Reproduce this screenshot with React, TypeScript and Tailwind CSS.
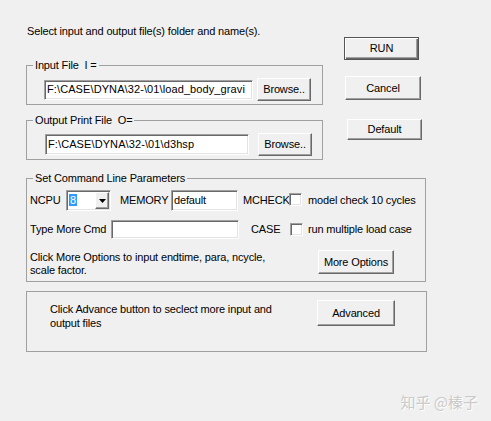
import React from "react";

const raised =
  "flex items-center justify-center bg-[#f0f0f0] border border-t-white border-l-white border-r-[#696969] border-b-[#696969] shadow-[inset_-1px_-1px_0_#a0a0a0]";
const sunken =
  "bg-white border border-t-[#a0a0a0] border-l-[#a0a0a0] border-r-white border-b-white shadow-[inset_1px_1px_0_#696969,inset_-1px_-1px_0_#e3e3e3]";

function Btn({ className, children }: { className: string; children: React.ReactNode }) {
  return <div className={`${raised} ${className}`}>{children}</div>;
}

function Check() {
  return <div className={`${sunken} w-[13px] h-[13px] shrink-0`} />;
}

export default function App() {
  return (
    <div className="relative w-[491px] h-[421px] overflow-hidden bg-[#f0f0f0] text-black text-[11px] leading-[13px] tracking-[-0.15px] font-['Liberation_Sans',Arial,sans-serif]">
      {/* upper part: file groups on the left, command buttons on the right */}
      <div className="flex">
        <div className="ml-[26px] w-[297px]">
          <p className="pt-[25px] pl-[1px] whitespace-nowrap">
            Select input and output file(s) folder and name(s).
          </p>

          <fieldset className="mt-[21px] border border-[#a0a0a0]">
            <legend className="ml-[6px] px-[2px] whitespace-pre">Input File  I =</legend>
            <div className="flex items-center pl-[17px] pt-[6px] pb-[3px]">
              <div className={`${sunken} w-[209px] h-[20px] pl-[2px] flex items-center overflow-hidden whitespace-nowrap tracking-[0.1px]`}>
                F:\CASE\DYNA\32-\01\load_body_gravi
              </div>
              <Btn className="ml-[4px] w-[54px] h-[23px]">Browse..</Btn>
            </div>
          </fieldset>

          <fieldset className="mt-[9px] border border-[#a0a0a0]">
            <legend className="ml-[6px] px-[2px] whitespace-pre">Output Print File  O=</legend>
            <div className="flex items-center pl-[18px] pt-[6px] pb-[3px]">
              <div className={`${sunken} w-[204px] h-[21px] pl-[2px] flex items-center overflow-hidden whitespace-nowrap tracking-[0.1px]`}>
                F:\CASE\DYNA\32-\01\d3hsp
              </div>
              <Btn className="ml-[9px] w-[54px] h-[23px]">Browse..</Btn>
            </div>
          </fieldset>
        </div>

        <div className="ml-[21px] flex flex-col items-start">
          <Btn className="mt-[37px] w-[75px] h-[23px] !border-[#555] shadow-[inset_1px_1px_0_#fff,inset_-1px_-1px_0_#696969,inset_-2px_-2px_0_#a0a0a0]">
            RUN
          </Btn>
          <Btn className="mt-[16px] ml-[1px] w-[76px] h-[24px]">Cancel</Btn>
          <Btn className="mt-[19px] ml-[3px] w-[75px] h-[21px]">Default</Btn>
        </div>
      </div>

      {/* command line parameters */}
      <fieldset className="mt-[12px] ml-[26px] w-[400px] border border-[#a0a0a0]">
        <legend className="ml-[6px] px-[2px]">Set Command Line Parameters</legend>
        <div className="pl-[3px] pt-[5px] pb-[4px]">
          <div className="flex items-center h-[21px]">
            <span className="w-[36px]">NCPU</span>
            <div className={`${sunken} w-[45px] h-[21px] flex items-center`}>
              <div className="flex-1 pl-[2px]">
                <span className="bg-[#3399ff] text-white px-[1px]">8</span>
              </div>
              <div className={`${raised} w-[14px] h-[17px] mr-[1px]`}>
                <svg width="7" height="4" viewBox="0 0 7 4">
                  <polygon points="0,0 7,0 3.5,4" fill="#000" />
                </svg>
              </div>
            </div>
            <span className="ml-[9px] w-[51px]">MEMORY</span>
            <div className={`${sunken} w-[67px] h-[21px] pl-[2px] flex items-center`}>default</div>
            <span className="ml-[5px] w-[46px] whitespace-nowrap">MCHECK</span>
            <div className="-mt-[3px]">
              <Check />
            </div>
            <span className="ml-[6px] whitespace-nowrap">model check 10 cycles</span>
          </div>

          <div className="flex items-center h-[19px] mt-[9px]">
            <span className="w-[81px] whitespace-nowrap">Type More Cmd</span>
            <div className={`${sunken} w-[128px] h-[19px]`} />
            <span className="ml-[12px] w-[39px]">CASE</span>
            <Check />
            <span className="ml-[5px] whitespace-nowrap">run multiple load case</span>
          </div>

          <div className="flex items-start mt-[11px]">
            <p className="w-[288px] mt-[1px] whitespace-nowrap">
              Click More Options to input endtime, para, ncycle,
              <br />
              scale factor.
            </p>
            <Btn className="w-[76px] h-[24px]">More Options</Btn>
          </div>
        </div>
      </fieldset>

      {/* advanced files */}
      <div className="mt-[9px] ml-[26px] w-[401px] h-[61px] border border-[#a0a0a0] flex items-start">
        <p className="ml-[23px] mt-[10px] w-[267px] leading-[14px] whitespace-nowrap">
          Click Advance button to seclect more input and
          <br />
          output files
        </p>
        <Btn className="mt-[8px] w-[78px] h-[26px]">Advanced</Btn>
      </div>

      <div className="absolute right-[13px] bottom-[10px] text-[15px] leading-[18px] tracking-normal text-[#cacaca] [text-shadow:1px_1px_0_#fff] font-['Noto_Sans_CJK_SC',sans-serif]">
        知乎 @榛子
      </div>
    </div>
  );
}
